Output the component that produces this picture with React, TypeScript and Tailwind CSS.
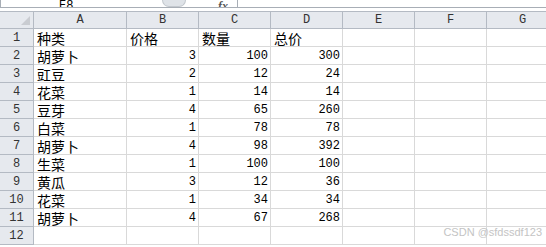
const cols = ['A', 'B', 'C', 'D', 'E', 'F', 'G']

const rows: (string | number)[][] = [
  ['种类', '价格', '数量', '总价'],
  ['胡萝卜', 3, 100, 300],
  ['豇豆', 2, 12, 24],
  ['花菜', 1, 14, 14],
  ['豆芽', 4, 65, 260],
  ['白菜', 1, 78, 78],
  ['胡萝卜', 4, 98, 392],
  ['生菜', 1, 100, 100],
  ['黄瓜', 3, 12, 36],
  ['花菜', 1, 34, 34],
  ['胡萝卜', 4, 67, 268],
  [],
]

const cjk = { fontFamily: '"Noto Sans CJK SC", sans-serif' }
const mono = { fontFamily: '"Liberation Mono", monospace' }

export default function App() {
  return (
    <div className="relative w-[546px] h-[247px] overflow-hidden bg-white">
      {/* formula bar remnant */}
      <div className="flex h-[8px] border-b border-[#a8aeb6]">
        <div className="w-[162px] h-[7px] flex items-end pl-[58px] overflow-hidden border-l border-[#a8aeb6]">
          <span className="text-[12px] leading-[12px] text-black -mb-[5px]" style={mono}>E8</span>
        </div>
        <div className="w-[24px] h-[7px] rounded-b-full bg-[#dfe3e8] border border-t-0 border-[#c3c8ce]" />
        <div className="w-[52px] h-[7px] flex items-end justify-end pr-[9px] overflow-hidden border-r border-[#a8aeb6]">
          <span className="text-[12px] leading-[12px] italic font-bold text-[#555] -mb-[5px]" style={{ fontFamily: '"Liberation Serif", serif' }}>fx</span>
        </div>
        <div className="flex-1" />
      </div>
      <div className="h-[3px]" />

      {/* sheet grid */}
      <div className="grid grid-cols-[34px_93px_72px_72px_72px_72px_72px_72px] w-max">
        {/* header row */}
        <div className="relative h-[18px] bg-[#e6e9ee] border-t border-r border-b border-[#b4bac3]">
          <div className="absolute right-[3px] bottom-[3px] w-0 h-0 border-l-[9px] border-l-transparent border-b-[9px] border-b-[#c9ccd1]" />
        </div>
        {cols.map((c) => (
          <div
            key={c}
            className="h-[18px] flex items-center justify-center bg-[#e6e9ee] border-t border-r border-b border-[#b4bac3] text-[12px] text-[#333]"
            style={mono}
          >
            {c}
          </div>
        ))}

        {rows.map((r, i) => (
          <div key={i} className="contents">
            <div
              className="h-[18px] flex items-center justify-center bg-[#e6e9ee] border-r border-b border-[#b4bac3] text-[12px] text-[#333]"
              style={mono}
            >
              {i + 1}
            </div>
            {cols.map((c, j) => {
              const v = r[j]
              const isNum = typeof v === 'number'
              return (
                <div
                  key={c}
                  className={
                    'h-[18px] flex items-end border-r border-b border-[#d9d9d9] text-black whitespace-nowrap ' +
                    (isNum ? 'justify-end pr-[2px] pb-[1px] text-[12px] leading-[14px]' : 'pl-[3px] text-[14px] leading-[16px]')
                  }
                  style={isNum ? mono : cjk}
                >
                  {v}
                </div>
              )
            })}
          </div>
        ))}
      </div>

      <div
        className="absolute right-[4px] bottom-[7px] text-[11px] text-[#c4c4c4]"
        style={{ fontFamily: '"Liberation Sans", sans-serif' }}
      >
        CSDN @sfdssdf123
      </div>
    </div>
  )
}
